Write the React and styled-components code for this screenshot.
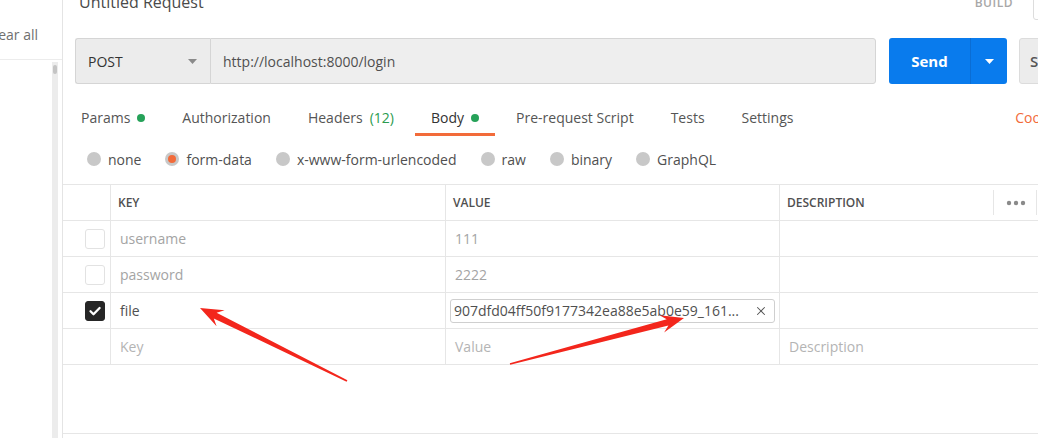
import React from "react";
import styled, { createGlobalStyle } from "styled-components";
import { X } from "lucide-react";

const GlobalStyle = createGlobalStyle`
  html, body {
    margin: 0;
    padding: 0;
    background: #fff;
    overflow: hidden;
  }
  body {
    font-family: "Open Sans", "Liberation Sans", sans-serif;
  }
`;

const Page = styled.div`
  position: relative;
  width: 1038px;
  height: 438px;
  display: flex;
  overflow: hidden;
`;

const Sidebar = styled.div`
  width: 62px;
  flex-shrink: 0;
  display: flex;
  flex-direction: column;
  border-right: 1px solid #e4e4e4;
`;

const ClearBar = styled.div`
  height: 60px;
  box-sizing: border-box;
  display: flex;
  align-items: flex-end;
  justify-content: flex-end;
  padding: 0 24px 15px 0;
  border-bottom: 1px solid #ececec;
  overflow: hidden;
  white-space: nowrap;
  font-size: 14px;
  color: #6f6f6f;
`;

const SidebarBody = styled.div`
  flex: 1;
  display: flex;
  justify-content: flex-end;
  padding: 2px 4px 0 0;
`;

const ScrollTrack = styled.div`
  width: 6px;
  background: #ececec;
`;

const ScrollThumb = styled.div`
  height: 9px;
  margin: 3px 1px;
  border-radius: 3px;
  background: #c4c4c4;
`;

const Main = styled.div`
  width: 1062px;
  flex-shrink: 0;
  display: flex;
  flex-direction: column;
`;

const TitleBar = styled.div`
  display: flex;
  align-items: center;
  height: 24px;
  margin-top: -10px;
  padding: 0 16px;
`;

const Title = styled.div`
  font-size: 16px;
  color: #4a4a4a;
`;

const BuildLabel = styled.div`
  margin-left: auto;
  font-size: 12px;
  font-weight: 600;
  letter-spacing: 0.5px;
  color: #a8a8a8;
`;

const ModeBox = styled.div`
  width: 76px;
  height: 36px;
  margin-left: 20px;
  box-sizing: border-box;
  border: 1px solid #dddddd;
  border-radius: 3px;
`;

const UrlRow = styled.div`
  display: flex;
  height: 46px;
  margin-top: 24px;
  padding: 0 16px 0 12px;
`;

const MethodSelect = styled.div`
  width: 135px;
  box-sizing: border-box;
  display: flex;
  align-items: center;
  justify-content: space-between;
  padding: 0 13px 0 12px;
  background: #ececec;
  border: 1px solid #d5d5d5;
  border-right: none;
  border-radius: 3px 0 0 3px;
  font-size: 14px;
  color: #333;
`;

const UrlInput = styled.div`
  flex: 1;
  display: flex;
  align-items: center;
  padding-left: 12px;
  background: #eeeeee;
  border: 1px solid #d5d5d5;
  border-radius: 0 3px 3px 0;
  font-size: 14px;
  color: #505050;
`;

const SendGroup = styled.div`
  width: 118px;
  flex-shrink: 0;
  margin-left: 13px;
  display: flex;
  background: #097bed;
  border-radius: 3px;
`;

const SendMain = styled.div`
  flex: 1;
  display: flex;
  align-items: center;
  justify-content: center;
  color: #fff;
  font-size: 15px;
  font-weight: 700;
`;

const SendCaret = styled.div`
  width: 36px;
  display: flex;
  align-items: center;
  justify-content: center;
  border-left: 1px solid #0a6dd4;
`;

const SaveButton = styled.div`
  width: 90px;
  flex-shrink: 0;
  margin-left: 12px;
  box-sizing: border-box;
  display: flex;
  align-items: center;
  padding-left: 10px;
  background: #ececec;
  border: 1px solid #dcdcdc;
  border-radius: 3px;
  font-size: 15px;
  font-weight: 600;
  color: #555;
`;

const TabRow = styled.div`
  display: flex;
  height: 34px;
  margin-top: 18px;
  padding: 0 9px 0 2px;
`;

const Tab = styled.div`
  display: flex;
  align-items: center;
  gap: 7px;
  padding: 0 16px;
  margin-right: 5px;
  box-sizing: border-box;
  border-bottom: 3px solid ${(p) => (p.$active ? "#f26b3a" : "transparent")};
  font-size: 14px;
  color: ${(p) => (p.$active ? "#333" : "#555")};
  white-space: nowrap;
`;

const GreenDot = styled.span`
  width: 8px;
  height: 8px;
  border-radius: 50%;
  background: #26a259;
`;

const Count = styled.span`
  color: #2b9b4f;
`;

const Links = styled.div`
  margin-left: auto;
  display: flex;
  align-items: center;
  gap: 16px;
  padding-bottom: 3px;
  font-size: 14px;
  color: #f26b3a;
`;

const RadioRow = styled.div`
  display: flex;
  align-items: center;
  gap: 24px;
  height: 48px;
  box-sizing: border-box;
  padding: 0 0 2px 24px;
`;

const RadioItem = styled.div`
  display: flex;
  align-items: center;
  gap: 7px;
  font-size: 14px;
  color: #505050;
`;

const RadioDot = styled.span`
  width: 14px;
  height: 14px;
  border-radius: 50%;
  background: #c8c8c8;
  display: flex;
  align-items: center;
  justify-content: center;
  &::after {
    content: "";
    display: ${(p) => (p.$checked ? "block" : "none")};
    width: 8px;
    height: 8px;
    border-radius: 50%;
    background: #f26b3a;
  }
`;

const TableArea = styled.div`
  height: 250px;
  box-sizing: border-box;
  border-top: 1px solid #e6e6e6;
  border-bottom: 1px solid #e6e6e6;
`;

const HeaderRow = styled.div`
  display: grid;
  grid-template-columns: 47px 335px 334px 214px 43px 1fr;
  height: 36px;
  box-sizing: border-box;
  border-bottom: 1px solid #e6e6e6;
`;

const HeadCell = styled.div`
  display: flex;
  align-items: center;
  padding-left: ${(p) => (p.$first ? "0" : "7px")};
  border-left: ${(p) => (p.$first ? "none" : "1px solid #e6e6e6")};
  font-size: 12px;
  font-weight: 600;
  color: #505050;
`;

const ToolCell = styled.div`
  display: flex;
  align-items: center;
  gap: 12px;
`;

const ShortDivider = styled.span`
  width: 1px;
  height: 25px;
  background: #e6e6e6;
`;

const Row = styled.div`
  display: grid;
  grid-template-columns: 47px 335px 334px 1fr;
  height: 36px;
  box-sizing: border-box;
  border-bottom: 1px solid #e6e6e6;
`;

const CheckCell = styled.div`
  display: flex;
  align-items: center;
  padding-left: 22px;
`;

const Checkbox = styled.span`
  width: 20px;
  height: 20px;
  box-sizing: border-box;
  border-radius: 3px;
  border: 1px solid ${(p) => (p.$checked ? "#262626" : "#e2e2e2")};
  background: ${(p) => (p.$checked ? "#262626" : "#fff")};
  display: flex;
  align-items: center;
  justify-content: center;
`;

const Cell = styled.div`
  display: flex;
  align-items: center;
  padding: 0 ${(p) => (p.$tight ? "4px" : "9px")};
  border-left: 1px solid #e6e6e6;
  font-size: 14px;
  color: ${(p) =>
    p.$tone === "placeholder" ? "#b4b4b4" : p.$tone === "muted" ? "#a4a4a4" : "#505050"};
  white-space: nowrap;
  overflow: hidden;
`;

const FileChip = styled.div`
  flex: 1;
  height: 24px;
  box-sizing: border-box;
  display: flex;
  align-items: center;
  justify-content: space-between;
  padding: 0 6px 0 3px;
  border: 1px solid #cfcfcf;
  border-radius: 3px;
  color: #505050;
  overflow: hidden;
`;

const Overlay = styled.svg`
  position: absolute;
  left: 0;
  top: 0;
  pointer-events: none;
`;

const tabs = [
  { label: "Params", dot: true },
  { label: "Authorization" },
  { label: "Headers", count: "(12)" },
  { label: "Body", dot: true, active: true },
  { label: "Pre-request Script" },
  { label: "Tests" },
  { label: "Settings" },
];

const bodyTypes = ["none", "form-data", "x-www-form-urlencoded", "raw", "binary", "GraphQL"];

const rows = [
  { key: "username", value: "111", tone: "muted" },
  { key: "password", value: "2222", tone: "muted" },
  { key: "file", file: "907dfd04ff50f9177342ea88e5ab0e59_161...", checked: true },
];

function arrowPoints(x1, y1, x2, y2) {
  const len = Math.hypot(x2 - x1, y2 - y1);
  const ux = (x2 - x1) / len;
  const uy = (y2 - y1) / len;
  const nx = -uy;
  const ny = ux;
  const at = (back, side) => [x2 - ux * back + nx * side, y2 - uy * back + ny * side];
  const pts = [
    [x1 + nx * 0.8, y1 + ny * 0.8],
    at(17, 3.2),
    at(23, 9),
    [x2, y2],
    at(23, -9),
    at(17, -3.2),
    [x1 - nx * 0.8, y1 - ny * 0.8],
  ];
  return pts.map((p) => p.map((v) => v.toFixed(1)).join(",")).join(" ");
}

function Caret({ color }) {
  return (
    <svg width="9" height="5" viewBox="0 0 9 5">
      <path d="M0 0h9L4.5 5z" fill={color} />
    </svg>
  );
}

export default function App() {
  return (
    <>
      <GlobalStyle />
      <Page>
        <Sidebar>
          <ClearBar>Clear all</ClearBar>
          <SidebarBody>
            <ScrollTrack>
              <ScrollThumb />
            </ScrollTrack>
          </SidebarBody>
        </Sidebar>

        <Main>
          <TitleBar>
            <Title>Untitled Request</Title>
            <BuildLabel>BUILD</BuildLabel>
            <ModeBox />
          </TitleBar>

          <UrlRow>
            <MethodSelect>
              POST
              <Caret color="#8a8a8a" />
            </MethodSelect>
            <UrlInput>http://localhost:8000/login</UrlInput>
            <SendGroup>
              <SendMain>Send</SendMain>
              <SendCaret>
                <Caret color="#fff" />
              </SendCaret>
            </SendGroup>
            <SaveButton>Save</SaveButton>
          </UrlRow>

          <TabRow>
            {tabs.map((t) => (
              <Tab key={t.label} $active={t.active}>
                {t.label}
                {t.count && <Count>{t.count}</Count>}
                {t.dot && <GreenDot />}
              </Tab>
            ))}
            <Links>
              <span>Cookies</span>
              <span>Code</span>
            </Links>
          </TabRow>

          <RadioRow>
            {bodyTypes.map((b) => (
              <RadioItem key={b}>
                <RadioDot $checked={b === "form-data"} />
                {b}
              </RadioItem>
            ))}
          </RadioRow>

          <TableArea>
            <HeaderRow>
              <HeadCell $first />
              <HeadCell>KEY</HeadCell>
              <HeadCell>VALUE</HeadCell>
              <HeadCell>DESCRIPTION</HeadCell>
              <ToolCell>
                <ShortDivider />
                <svg width="20" height="6" viewBox="0 0 20 6">
                  <circle cx="3" cy="3" r="2.2" fill="#8a8a8a" />
                  <circle cx="10" cy="3" r="2.2" fill="#8a8a8a" />
                  <circle cx="17" cy="3" r="2.2" fill="#8a8a8a" />
                </svg>
              </ToolCell>
              <ToolCell>
                <ShortDivider />
              </ToolCell>
            </HeaderRow>

            {rows.map((r) => (
              <Row key={r.key}>
                <CheckCell>
                  <Checkbox $checked={r.checked}>
                    {r.checked && (
                      <svg width="14" height="14" viewBox="0 0 14 14">
                        <path
                          d="M2.5 7.3l3 3L11.6 4"
                          fill="none"
                          stroke="#fff"
                          strokeWidth="2.3"
                          strokeLinecap="round"
                          strokeLinejoin="round"
                        />
                      </svg>
                    )}
                  </Checkbox>
                </CheckCell>
                <Cell $tone={r.tone}>{r.key}</Cell>
                {r.file ? (
                  <Cell $tight>
                    <FileChip>
                      {r.file}
                      <X size={14} strokeWidth={1.8} color="#555" />
                    </FileChip>
                  </Cell>
                ) : (
                  <Cell $tone={r.tone}>{r.value}</Cell>
                )}
                <Cell />
              </Row>
            ))}

            <Row>
              <CheckCell />
              <Cell $tone="placeholder">Key</Cell>
              <Cell $tone="placeholder">Value</Cell>
              <Cell $tone="placeholder">Description</Cell>
            </Row>
          </TableArea>
        </Main>

        <Overlay width="1038" height="438" viewBox="0 0 1038 438">
          <polygon points={arrowPoints(347, 381, 200, 308)} fill="#f3261c" />
          <polygon points={arrowPoints(510, 364, 684, 318)} fill="#f3261c" />
        </Overlay>
      </Page>
    </>
  );
}
